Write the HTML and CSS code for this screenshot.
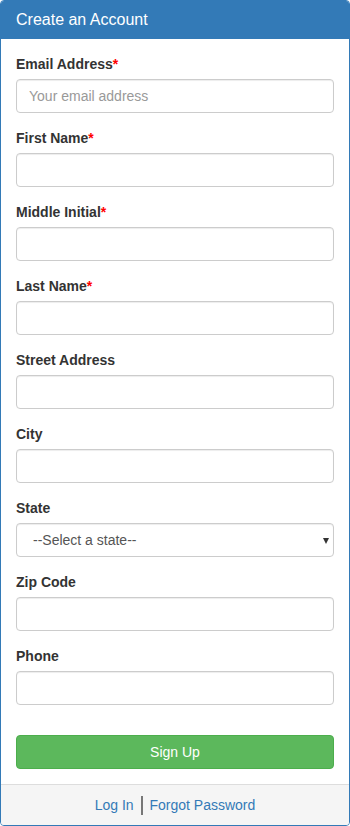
FILE: index.html
```html
<!DOCTYPE html>
<html lang="en">
  <head>
    <meta charset="UTF-8" />
    <meta name="viewport" content="width=device-width, initial-scale=1.0" />
    <title>Create an Account</title>
    <link rel="stylesheet" href="styles.css">
  </head>
  <body>
    <div class="panel">
      <div class="panel-heading">
        <h3 class="panel-title">Create an Account</h3>
      </div>

      <!-- Sign up form -->
      <form class="panel-body">
        <div class="form-group">
          <label for="email">Email Address<span class="req">*</span></label>
          <input type="text" id="email" class="form-control" placeholder="Your email address" />
        </div>
        <div class="form-group">
          <label for="first">First Name<span class="req">*</span></label>
          <input type="text" id="first" class="form-control" />
        </div>
        <div class="form-group">
          <label for="middle">Middle Initial<span class="req">*</span></label>
          <input type="text" id="middle" class="form-control" />
        </div>
        <div class="form-group">
          <label for="last">Last Name<span class="req">*</span></label>
          <input type="text" id="last" class="form-control" />
        </div>
        <div class="form-group">
          <label for="street">Street Address</label>
          <input type="text" id="street" class="form-control" />
        </div>
        <div class="form-group">
          <label for="city">City</label>
          <input type="text" id="city" class="form-control" />
        </div>
        <div class="form-group">
          <label for="state">State</label>
          <div class="select-wrap">
            <select id="state" class="form-control">
              <option>--Select a state--</option>
            </select>
          </div>
        </div>
        <div class="form-group">
          <label for="zip">Zip Code</label>
          <input type="text" id="zip" class="form-control" />
        </div>
        <div class="form-group">
          <label for="phone">Phone</label>
          <input type="text" id="phone" class="form-control" />
        </div>
        <div class="form-actions">
          <button type="button" class="btn-success">Sign Up</button>
        </div>
      </form>

      <div class="panel-footer">
        <a href="#">Log In</a>
        <span class="sep"></span>
        <a href="#">Forgot Password</a>
      </div>
    </div>
  </body>
</html>
```

FILE: styles.css
```css
/* Page */
* {
  box-sizing: border-box;
}

body {
  margin: 0;
  font-family: 'Liberation Sans', Arial, sans-serif;
  font-size: 14px;
  line-height: 20px;
  color: #333;
  background: #fff;
}

/* Panel */
.panel {
  border: 1px solid #337ab7;
  border-radius: 4px;
  background: #fff;
  overflow: hidden;
}

.panel-heading {
  background-color: #337ab7;
  color: #fff;
  padding: 10px 15px;
  border-bottom: 1px solid #337ab7;
}

.panel-title {
  margin: 0;
  font-size: 16px;
  font-weight: normal;
  line-height: 17px;
}

.panel-body {
  padding: 15px;
  margin: 0;
}

/* Form fields */
.form-group {
  margin-bottom: 15px;
}

label {
  display: block;
  font-weight: bold;
  margin-bottom: 5px;
}

.req {
  color: #f00;
}

.form-control {
  display: block;
  width: 100%;
  height: 34px;
  padding: 6px 12px;
  font-family: inherit;
  font-size: 14px;
  line-height: 20px;
  color: #555;
  background: #fff;
  border: 1px solid #ccc;
  border-radius: 4px;
  box-shadow: inset 0 1px 1px rgba(0, 0, 0, 0.075);
}

.form-control::placeholder {
  color: #999;
}

.form-control:focus {
  border-color: #66afe9;
  outline: none;
}

/* Select with custom arrow */
.select-wrap {
  position: relative;
}

select.form-control {
  appearance: none;
  -webkit-appearance: none;
  padding-left: 16px;
  color: #555;
}

.select-wrap::after {
  content: "";
  position: absolute;
  right: 5px;
  top: 15px;
  border-left: 3.5px solid transparent;
  border-right: 3.5px solid transparent;
  border-top: 6px solid #333;
  pointer-events: none;
}

/* Button */
.form-actions {
  padding-top: 15px;
}

.btn-success {
  display: block;
  width: 100%;
  height: 34px;
  font-family: inherit;
  font-size: 14px;
  color: #fff;
  background-color: #5cb85c;
  border: 1px solid #4cae4c;
  border-radius: 4px;
  cursor: pointer;
}

/* Footer */
.panel-footer {
  background-color: #f5f5f5;
  border-top: 1px solid #ddd;
  padding: 10px 15px;
  text-align: center;
}

.panel-footer a {
  color: #337ab7;
  text-decoration: none;
}

.sep {
  display: inline-block;
  width: 2px;
  height: 19px;
  background: #777;
  vertical-align: -5px;
  margin: 0 3px;
}
```
